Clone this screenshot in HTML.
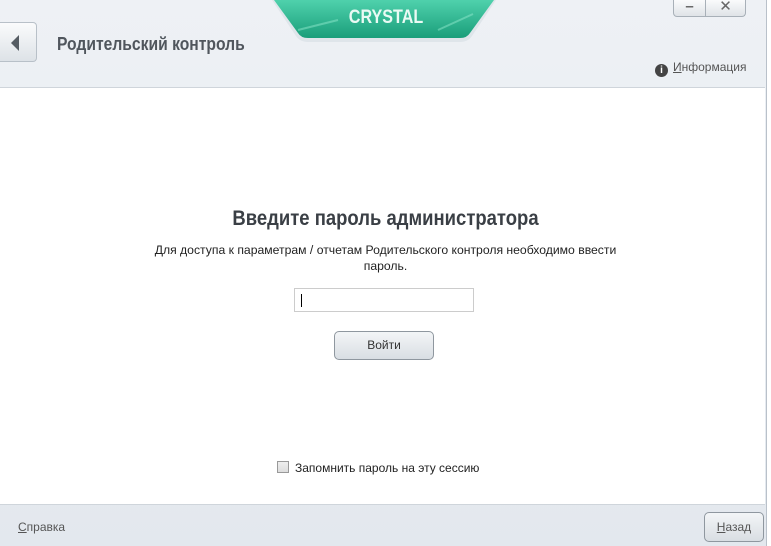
<!DOCTYPE html>
<html><head><meta charset="utf-8"><style>
*{margin:0;padding:0;box-sizing:border-box}
body{width:771px;height:546px;overflow:hidden;background:#fff;font-family:"Liberation Sans","DejaVu Sans",sans-serif;position:relative}
.win{position:absolute;left:0;top:0;width:767px;height:546px;background:linear-gradient(#eef1f5,#e3e8ee);border-right:1px solid #b9c1ca}
.panel{position:absolute;left:0;top:87px;width:765px;height:418px;background:#fff;border-top:1px solid #cfd5db;border-bottom:1px solid #cfd5db}
.back{position:absolute;left:0;top:22px;width:37px;height:40px;border:1px solid #b8c0c8;border-left:none;border-radius:0 4px 4px 0;background:linear-gradient(#fafbfc,#dde2e7)}
.back:after{content:"";position:absolute;left:11px;top:12px;border-right:8px solid #555c63;border-top:8px solid transparent;border-bottom:8px solid transparent}
.title{position:absolute;left:57px;top:34px;font-size:18px;font-weight:bold;color:#50565d;transform:scaleX(.87);transform-origin:left;white-space:nowrap}
.info{position:absolute;left:655px;top:60px;font-size:12px;color:#555}
.info i{display:inline-block;width:13px;height:13px;border-radius:50%;background:#444;color:#fff;font-style:normal;font-size:10px;font-weight:bold;text-align:center;line-height:13px;margin-right:5px;vertical-align:-2px}
.wb{position:absolute;top:0;height:17px;border:1px solid #a8b0b8;border-top:none;background:linear-gradient(#fafbfc,#dfe3e7);color:#666;font-size:15px;font-weight:bold;text-align:center;line-height:14px}
.c{position:absolute;left:0;width:771px;text-align:center;color:#222;white-space:nowrap}
.inp{position:absolute;left:294px;top:288px;width:180px;height:24px;border:1px solid #ccc}
.inp:after{content:"";position:absolute;left:6px;top:5px;width:1px;height:13px;background:#000}
.btn{position:absolute;left:334px;top:331px;width:100px;height:29px;border:1px solid #8f979f;border-radius:5px;background:linear-gradient(#f3f5f7,#d9dee3);font-size:12px;color:#333;text-align:center;line-height:27px}
.chk{position:absolute;left:277px;top:461px;font-size:12px;color:#222}
.chk b{display:inline-block;width:12px;height:12px;border:1px solid #999;background:linear-gradient(#eee,#ddd);vertical-align:-1px;margin-right:6px}
</style></head><body>
<div class="win">
<svg style="position:absolute;left:268px;top:0" width="232" height="46">
<defs><linearGradient id="g" x1="0" y1="0" x2="0" y2="1"><stop offset="0" stop-color="#4fd1ac"/><stop offset="1" stop-color="#1a9e7a"/></linearGradient></defs>
<path d="M4 0 L228 0 L204 36 Q200 42 192 42 L40 42 Q32 42 28 36 Z" fill="#dfe5ea"/>
<path d="M6 0 L226 0 L202 33 Q199 38 192 38 L40 38 Q33 38 30 33 Z" fill="url(#g)"/>
<path d="M30 30 L70 20 M170 30 L205 14" stroke="#8fe8cc" stroke-width="2" opacity=".5"/>
<text x="118" y="23" text-anchor="middle" font-family="Liberation Sans" font-weight="bold" font-size="19" fill="#eafaf4" transform="translate(118 0) scale(0.85 1) translate(-118 0)">CRYSTAL</text>
</svg>
<div class="wb" style="left:673px;width:33px;border-radius:0 0 0 4px">–</div>
<div class="wb" style="left:706px;width:40px;border-left:none;border-radius:0 0 4px 0">✕</div>
<div class="back"></div>
<div class="title">Родительский контроль</div>
<div class="info"><i>i</i><u>И</u>нформация</div>
<div class="panel"></div>
<div class="c" style="top:207px;font-size:21px;font-weight:bold;color:#3a3f45;transform:scaleX(.88)">Введите пароль администратора</div>
<div class="c" style="top:242px;font-size:12.2px;line-height:16px">Для доступа к параметрам / отчетам Родительского контроля необходимо ввести<br>пароль.</div>
<div class="inp"></div>
<div class="btn">Войти</div>
<div class="chk"><b></b>Запомнить пароль на эту сессию</div>
<div style="position:absolute;left:18px;top:520px;font-size:12px;color:#555"><u>С</u>правка</div>
<div class="btn" style="left:704px;top:512px;width:60px;height:30px;line-height:28px;color:#555"><u>Н</u>азад</div>
</div>
</body></html>
